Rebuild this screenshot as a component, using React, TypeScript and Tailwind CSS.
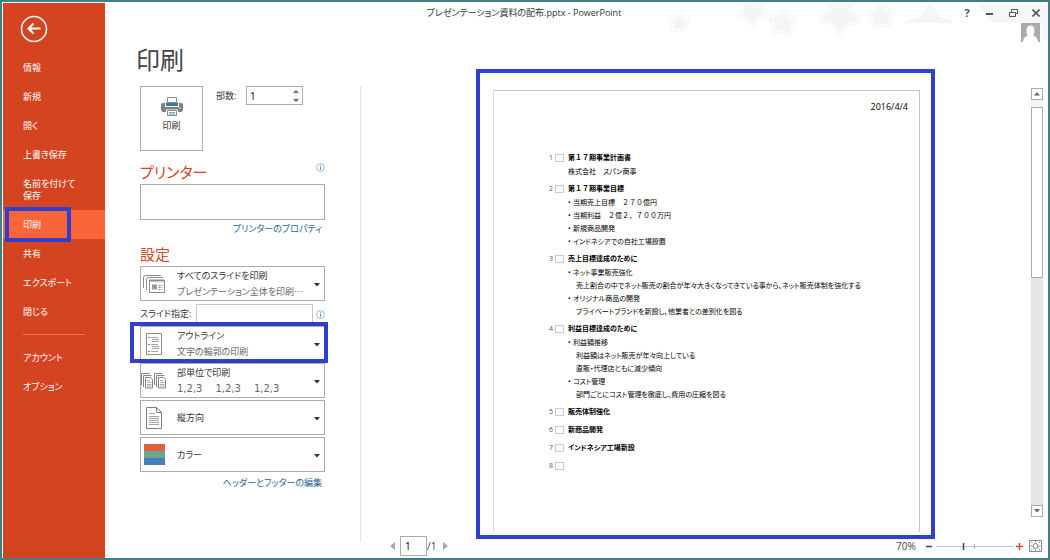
import type { ReactNode } from "react";

const mainNav = [
  { label: "情報" },
  { label: "新規" },
  { label: "開く" },
  { label: "上書き保存" },
  { label: "名前を付けて保存", tall: true },
  { label: "印刷", active: true },
  { label: "共有" },
  { label: "エクスポート" },
  { label: "閉じる" },
];

const outline = [
  { title: "第１７期事業計画書", lines: [{ text: "株式会社　スパン商事", level: 0 }] },
  {
    title: "第１７期事業目標",
    lines: [
      { text: "当期売上目標　２７０億円", level: 1 },
      { text: "当期利益　２億２，７００万円", level: 1 },
      { text: "新規商品開発", level: 1 },
      { text: "インドネシアでの自社工場設置", level: 1 },
    ],
  },
  {
    title: "売上目標達成のために",
    lines: [
      { text: "ネット事業販売強化", level: 1 },
      { text: "売上割合の中でネット販売の割合が年々大きくなってきている事から、ネット販売体制を強化する", level: 2 },
      { text: "オリジナル商品の開発", level: 1 },
      { text: "プライベートブランドを新設し、他業者との差別化を図る", level: 2 },
    ],
  },
  {
    title: "利益目標達成のために",
    lines: [
      { text: "利益額推移", level: 1 },
      { text: "利益額はネット販売が年々向上している", level: 2 },
      { text: "直販・代理店ともに減少傾向", level: 2 },
      { text: "コスト管理", level: 1 },
      { text: "部門ごとにコスト管理を徹底し、費用の圧縮を図る", level: 2 },
    ],
  },
  { title: "販売体制強化", lines: [] },
  { title: "新商品開発", lines: [] },
  { title: "インドネシア工場新設", lines: [] },
  { title: "", lines: [] },
];

const digitSpacing = (text: string) => (/[０-９]/.test(text) ? "[font-feature-settings:normal]" : "");

function Star({ x, y, r, turn = 0 }: { x: number; y: number; r: number; turn?: number }) {
  const points = Array.from({ length: 10 }, (_, i) => {
    const a = (Math.PI / 5) * i - Math.PI / 2 + (turn * Math.PI) / 180;
    const d = i % 2 ? r * 0.58 : r;
    return `${x + d * Math.cos(a)},${y + d * Math.sin(a)}`;
  }).join(" ");
  return (
    <g strokeLinejoin="round">
      <polygon points={points} fill="#f3f3f3" stroke="#f3f3f3" strokeWidth="7" />
      <polygon points={points} fill="#fff" stroke="#fff" strokeWidth="5" />
      <polygon points={points} fill="#f5f5f5" stroke="#f5f5f5" strokeWidth="2" />
    </g>
  );
}

function StarBackdrop() {
  return (
    <svg className="pointer-events-none absolute top-0 right-0" width="385" height="44" viewBox="-10 0 385 44" aria-hidden="true">
      <Star x={6} y={20} r={7} />
      <Star x={80} y={7} r={13} turn={36} />
      <Star x={110} y={20} r={11} turn={5} />
      <Star x={167} y={11} r={18} turn={38} />
      <Star x={208} y={13} r={11} turn={-5} />
      <path d="M232 20 q2 -3 12 -5 q5 -1 8 -9 q5 -8 10 0 q3 8 9 9 q8 2 9 5z" fill="#f5f5f5" />
      <path d="M305 1 q8 14 16 19 H375 V1z" fill="#f6f6f6" />
      <path d="M346 20 h29 v18 l-6 -2 v-16z" fill="#f8f8f8" />
    </svg>
  );
}

function InfoButton() {
  return (
    <button type="button" aria-label="情報を表示" className="flex size-[9px] items-center justify-center">
      <svg width="9" height="9" viewBox="0 0 9 9">
        <circle cx="4.5" cy="4.5" r="3.9" fill="#fff" stroke="#7ba7d6" strokeWidth="0.8" />
        <path d="M4.5 4v2.8M4.5 2.2v1" stroke="#3f7fc4" strokeWidth="0.9" />
      </svg>
    </button>
  );
}

function PrinterIcon() {
  return (
    <svg width="22" height="20" viewBox="0 0 22 20" aria-hidden="true">
      <path d="M0 7.500q0-1.500 1.500-1.500h19q1.500 0 1.500 1.500V13l-1.500 2H1.500L0 13z" fill="#7f807b" />
      <path d="M4 5h14v5H4z" fill="#fff" />
      <path d="M5 5.500h12V9H5z" fill="#3576bd" />
      <path d="M6.500.5h9V5.500h-9z" fill="#fff" stroke="#8a8a8a" />
      <circle cx="19" cy="11" r="0.800" fill="#fff" />
      <path d="M5 12.500h12v2.500H5z" fill="#fff" />
      <path d="M6.500 13.500h9V18.500h-9z" fill="#fff" stroke="#8a8a8a" />
      <path d="M8 15.500h6M8 17.200h6" stroke="#6f9fd2" />
    </svg>
  );
}

function SlidesIcon() {
  return (
    <svg width="22" height="18" viewBox="0 0 22 18" fill="none" stroke="#8b8b8b" aria-hidden="true">
      <path d="M.5 13V2.500q0-2 2-2H18M3.500 15V4.500q0-2 2-2H20" />
      <path d="M6.500 5.500h15v12h-15z" fill="#fff" />
      <path d="M6.500 5.500h15" strokeWidth="2" />
      <path d="M9 9.500h5v5H9z" fill="#999" stroke="none" />
      <path d="M15.500 10.500h4M15.500 12.500h4M15.500 14.500h4" strokeDasharray="2 1" />
    </svg>
  );
}

function OutlineIcon() {
  return (
    <svg width="16" height="22" viewBox="0 0 16 22" fill="none" stroke="#8b8b8b" aria-hidden="true">
      <path d="M.5.5h15v21H.5z" fill="#fff" />
      <path d="M2 4.500h2M2 11.500h2M2 18.500h2" />
      <path d="M5 4.500h7M6 6.500h7M6 8.500h7M5 11.500h7M6 13.500h7M6 15.500h7M5 18.500h7" strokeWidth="0.800" />
    </svg>
  );
}

function CollateIcon() {
  const stack = (
    <>
      <path d="M.5 12V.5h8M2.500 14V2.500h8" />
      <path d="M4.500 4.500h5l2 2v8.500h-7z" fill="#fff" />
      <path d="M6 7.500h3M6 9.500h4.500M6 11.500h4.500M6 13.200h4.500" strokeWidth="0.700" />
    </>
  );
  return (
    <svg width="26" height="16" viewBox="0 0 26 16" fill="none" stroke="#858585" aria-hidden="true">
      {stack}
      <g transform="translate(13 0)">{stack}</g>
    </svg>
  );
}

function PortraitIcon() {
  return (
    <svg width="16" height="22" viewBox="0 0 16 22" fill="none" stroke="#7d7d7d" aria-hidden="true">
      <path d="M.5.5h10l5 5v16H.5z" fill="#fff" />
      <path d="M10.500.5v5h5" />
      <path d="M3 6.500h6M3 9.500h10M3 11.500h10M3 13.500h10M3 15.500h10M3 17.500h10" strokeWidth="0.700" />
    </svg>
  );
}

function ColorIcon() {
  return (
    <svg width="21" height="21" viewBox="0 0 21 21" aria-hidden="true">
      <path d="M0 0h21v7H0z" fill="#e0603f" />
      <path d="M0 7h21v7H0z" fill="#6fa58f" />
      <path d="M0 14h21v7H0z" fill="#437fbf" />
    </svg>
  );
}

type SettingProps = {
  label: string;
  value: string;
  icon: ReactNode;
  detail?: ReactNode;
  highlighted?: boolean;
};

function SettingSelect({ label, value, icon, detail, highlighted }: SettingProps) {
  return (
    <div className="relative flex h-[35px] items-center border border-[#ababab] bg-white">
      <span className="flex w-[26px] shrink-0 justify-center">{icon}</span>
      <div className="min-w-0 flex-1 pl-[10px]">
        <select aria-label={label} className="block h-4 w-full appearance-none bg-transparent text-[9px] leading-4 text-[#333]">
          <option>{value}</option>
        </select>
        {detail && <div className="h-4 text-[9px] leading-4 whitespace-nowrap text-[#666]">{detail}</div>}
      </div>
      <svg className="pointer-events-none absolute top-4 right-1" width="6" height="4" viewBox="0 0 6 4" aria-hidden="true">
        <path d="M0 0h6L3 3.500z" fill="#333" />
      </svg>
      {highlighted && <span className="pointer-events-none absolute -top-[5px] -right-1 -bottom-[3px] -left-[11px] border-4 border-[#3040cc]" />}
    </div>
  );
}

function Sidebar() {
  return (
    <nav className="w-[102px] shrink-0 bg-[#d54421] text-[9px] leading-3 text-white">
      <button type="button" aria-label="戻る" className="mt-3 ml-[17px] block">
        <svg width="28" height="28" viewBox="0 0 28 28" fill="none" stroke="#fff">
          <circle cx="14" cy="14" r="12.500" strokeWidth="1.500" />
          <path d="M20.500 13.500H9M13.500 8.500l-5 5 5 5" strokeWidth="2" />
        </svg>
      </button>
      <ul className="mt-[10px]">
        {mainNav.map((item) => (
          <li key={item.label} className={item.active ? "relative bg-[#f96439]" : ""}>
            <a href="#" className={item.tall ? "flex h-[41px] items-center pr-7 pl-5" : "flex h-[29px] items-center pl-5 whitespace-nowrap"}>
              {item.label}
            </a>
            {item.active && (
              <span className="pointer-events-none absolute -top-[3px] -bottom-[3px] left-[2px] w-[66px] border-4 border-[#3040cc]" />
            )}
          </li>
        ))}
      </ul>
      <hr className="mx-5 mt-2 mb-2 border-[#f0714d]" />
      <ul>
        <li>
          <a href="#" className="flex h-[29px] items-center pl-5">アカウント</a>
        </li>
        <li>
          <a href="#" className="flex h-[29px] items-center pl-5">オプション</a>
        </li>
      </ul>
    </nav>
  );
}

function TitleBar() {
  return (
    <header className="relative">
      <div className="flex h-5 items-center">
        <h2 className="flex-1 text-center text-[9px] leading-4 text-[#333]">プレゼンテーション資料の配布.pptx - PowerPoint</h2>
        <div className="flex w-[105px] justify-end gap-px pr-px text-[#555]">
          <button type="button" className="h-4 w-[22px] text-[11px] leading-4 font-bold">?</button>
          <button type="button" aria-label="最小化" className="flex h-4 w-[22px] items-center justify-center">
            <svg width="8" height="8" viewBox="0 0 8 8"><path d="M0 5h7" stroke="currentColor" strokeWidth="2" /></svg>
          </button>
          <button type="button" aria-label="元に戻す" className="flex h-4 w-[22px] items-center justify-center">
            <svg width="9" height="8" viewBox="0 0 9 8" fill="none" stroke="currentColor">
              <path d="M2.500 3V.5h6v4H7" />
              <path d="M.5 3.500H6.500v4H.5z" />
            </svg>
          </button>
          <button type="button" aria-label="閉じる" className="flex h-4 w-[22px] items-center justify-center">
            <svg width="8" height="8" viewBox="0 0 8 8"><path d="M.5.5l7 7M7.500.5l-7 7" stroke="currentColor" strokeWidth="1.600" /></svg>
          </button>
        </div>
      </div>
      <div className="flex justify-end pr-2">
        <svg width="19" height="19" viewBox="0 0 19 19" aria-hidden="true">
          <path d="M0 0h19v19H0z" fill="#ababab" />
          <path d="M2 19q0-5 5-6.500Q5 10 5.500 6.500 6 2.500 9.500 2.500t4 4Q14 10 12 12.500 17 14 17 19z" fill="#fff" />
        </svg>
      </div>
    </header>
  );
}

function PrintSettings() {
  return (
    <section className="mb-4 flex w-[256px] shrink-0 flex-col">
      <h1 className="h-11 pl-[31px] text-[24px] leading-9 text-[#444]">印刷</h1>
      <div className="flex-1 border-r border-[#e1e1e1] pr-[35px] pl-[35px]">
        <div className="flex items-start">
          <button type="button" className="flex h-[65px] w-[63px] flex-col items-center border border-[#ababab] pt-[10px] text-[9px] leading-4 text-[#333]">
            <PrinterIcon />
            <span className="mt-px">印刷</span>
          </button>
          <label htmlFor="copies" className="ml-[13px] w-[30px] text-[9px] leading-5 text-[#333]">部数:</label>
          <div className="relative">
            <input id="copies" type="text" defaultValue="1" className="block h-[19px] w-[57px] border border-[#ababab] pl-[3px] text-[10px] text-black" />
            <svg className="pointer-events-none absolute top-1 right-1" width="6" height="12" viewBox="0 0 6 12" aria-hidden="true">
              <path d="M0 3h6L3 0zM0 9h6L3 12z" fill="#666" />
            </svg>
          </div>
        </div>

        <div className="mt-[9px] flex justify-between">
          <h2 className="text-[15px] leading-6 text-[#d54421]">プリンター</h2>
          <div className="pt-[3px]">
            <InfoButton />
          </div>
        </div>
        <div className="h-9 border border-[#ababab]" />
        <div className="h-[18px] pr-[3px] text-right text-[9px] leading-[18px]">
          <a href="#" className="text-[#2a6496]">プリンターのプロパティ</a>
        </div>

        <h2 className="mt-1 text-[15px] leading-6 text-[#d54421]">設定</h2>
        <SettingSelect label="印刷範囲" value="すべてのスライドを印刷" detail="プレゼンテーション全体を印刷⋯" icon={<SlidesIcon />} />
        <div className="mt-[3px] mb-[2px] flex h-5 items-center justify-between">
          <label htmlFor="slides" className="w-14 text-[9px] leading-5 whitespace-nowrap text-[#333]">スライド指定:</label>
          <input id="slides" type="text" className="h-5 w-[117px] border border-[#c6c6c6] px-1 text-[10px]" />
          <div className="flex flex-1 justify-end">
            <InfoButton />
          </div>
        </div>
        <div className="flex flex-col gap-[2px]">
          <SettingSelect label="レイアウト" value="アウトライン" detail="文字の輪郭の印刷" icon={<OutlineIcon />} highlighted />
          <SettingSelect
            label="印刷順序"
            value="部単位で印刷"
            detail={
              <span className="flex gap-[13px] font-['DejaVu_Sans',sans-serif] text-[10px]">
                <span>1,2,3</span>
                <span>1,2,3</span>
                <span>1,2,3</span>
              </span>
            }
            icon={<CollateIcon />}
          />
          <SettingSelect label="用紙の向き" value="縦方向" icon={<PortraitIcon />} />
          <SettingSelect label="色" value="カラー" icon={<ColorIcon />} />
        </div>
        <div className="mt-[2px] pr-[3px] text-right text-[9px] leading-[18px]">
          <a href="#" className="text-[#2a6496]">ヘッダーとフッターの編集</a>
        </div>
      </div>
    </section>
  );
}

function OutlinePage() {
  return (
    <article className="h-full border border-b-0 border-[#c4c4c4] border-l-[#dcdcdc] bg-white text-black">
      <p className="pt-2 pr-[11px] text-right text-[9px] leading-4">2016/4/4</p>
      <ol className="mt-9 ml-[55px] flex flex-col gap-1 text-[7px]">
        {outline.map((slide, index) => (
          <li key={index} className="flex">
            <span className="w-[6px] leading-[14px] text-[#555]">{index + 1}</span>
            <span className="mt-[3px] h-2 w-[9px] border border-[#c9c9d4]" />
            <div className="min-h-[14px] pl-1">
              <h3 className={`leading-[14px] font-bold ${digitSpacing(slide.title)}`}>{slide.title}</h3>
              {slide.lines.map((line) => (
                <p key={line.text} className={line.level === 2 ? "pl-2 leading-[13px]" : "flex leading-[13px]"}>
                  {line.level === 1 && <span className="w-[5px] shrink-0">•</span>}
                  <span className={digitSpacing(line.text)}>{line.text}</span>
                </p>
              ))}
            </div>
          </li>
        ))}
      </ol>
    </article>
  );
}

function ScrollBar() {
  return (
    <div className="flex w-3 flex-col bg-[#e6e6e6]">
      <button type="button" aria-label="上へスクロール" className="flex h-3 items-center justify-center border border-[#ababab] bg-white">
        <svg width="6" height="4" viewBox="0 0 6 4"><path d="M0 3.500h6L3 0z" fill="#666" /></svg>
      </button>
      <div className="h-[7px] bg-[#f4f4f4]" />
      <div className="h-[171px] border border-[#ababab] bg-white" />
      <div className="flex-1" />
      <button type="button" aria-label="下へスクロール" className="flex h-3 items-center justify-center border border-[#ababab] bg-white">
        <svg width="6" height="4" viewBox="0 0 6 4"><path d="M0 0h6L3 3.500z" fill="#666" /></svg>
      </button>
    </div>
  );
}

function StatusBar() {
  return (
    <footer className="flex h-[14px] items-center justify-between pr-[6px] pl-[29px] text-[10px] text-[#444]">
      <div className="flex items-center">
        <button type="button" aria-label="前のページ">
          <svg className="block" width="5" height="8" viewBox="0 0 5 8"><path d="M5 0v8L0 4z" fill="#aaa5aa" /></svg>
        </button>
        <input type="text" aria-label="ページ番号" defaultValue="1" className="ml-[5px] h-5 w-[27px] border border-[#ababab] pl-1 text-[10px] text-black" />
        <span className="w-4">/1</span>
        <button type="button" aria-label="次のページ">
          <svg className="block" width="5" height="8" viewBox="0 0 5 8"><path d="M0 0v8l5-4z" fill="#aaa5aa" /></svg>
        </button>
      </div>
      <div className="flex items-center">
        <span className="w-[30px]">70%</span>
        <button type="button" aria-label="縮小">
          <svg className="block" width="6" height="7" viewBox="0 0 6 7"><path d="M0 3.500h6" stroke="#444" strokeWidth="1.500" /></svg>
        </button>
        <div className="relative ml-1 h-[9px] w-[77px]">
          <svg className="block" width="77" height="9" viewBox="0 0 77 9" aria-hidden="true">
            <path d="M0 4.500h77" stroke="#bfc3ce" />
            <path d="M38.500 2v5" stroke="#9fb4cf" />
            <path d="M27.500 1v7" stroke="#444" strokeWidth="1.500" />
          </svg>
          <input type="range" aria-label="ズーム" min="10" max="400" defaultValue="70" className="absolute inset-0 w-full opacity-0" />
        </div>
        <button type="button" aria-label="拡大" className="ml-[3px]">
          <svg className="block" width="7" height="7" viewBox="0 0 7 7"><path d="M0 3.500h7M3.500 0v7" stroke="#e4472a" strokeWidth="1.500" /></svg>
        </button>
        <button type="button" aria-label="ページに合わせる" className="ml-[6px]">
          <svg className="block" width="13" height="12" viewBox="0 0 13 12" fill="none">
            <path d="M.5.5h12v11H.5z" stroke="#888" />
            <circle cx="6.5" cy="6" r="2.500" stroke="#777" />
            <path d="M6.500 1v1.500M6.500 9.500V11M1.500 6h1.500M10 6h1.500M2 2l1.500 1M11 2L9.500 3M2 10l1.500-1M11 10L9.500 9" stroke="#5d8fc4" />
          </svg>
        </button>
      </div>
    </footer>
  );
}

export default function App() {
  return (
    <div className="flex min-h-screen border-2 border-[#3f8185] bg-white pt-px pl-px font-['Open_Sans','Noto_Sans_CJK_JP',sans-serif] [font-feature-settings:'palt']">
      <Sidebar />
      <main className="relative flex min-w-0 flex-1 flex-col">
        <StarBackdrop />
        <TitleBar />
        <div className="flex flex-1">
          <PrintSettings />
          <section className="flex min-w-0 flex-1 flex-col pt-[27px] pb-[5px]">
            <div className="flex flex-1 pr-[5px] pl-[115px]">
              <div className="min-w-0 flex-1 border-4 border-[#3040cc] pt-[17px] pr-[11px] pb-[3px] pl-[13px]">
                <OutlinePage />
              </div>
              <div className="mt-[19px] mb-[22px] ml-24 flex">
                <ScrollBar />
              </div>
            </div>
            <StatusBar />
          </section>
        </div>
      </main>
    </div>
  );
}
